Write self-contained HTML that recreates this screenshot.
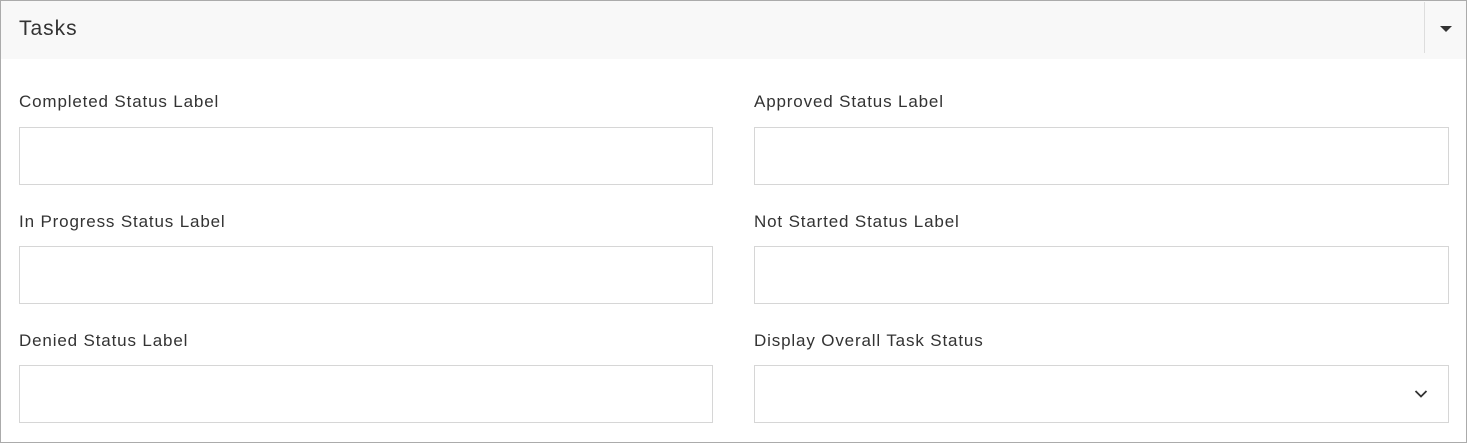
<!DOCTYPE html>
<html><head><style>
html,body{margin:0;padding:0;width:1467px;height:443px;background:#fff;overflow:hidden}
body{font-family:"Liberation Sans",sans-serif;color:#333}
.box{position:absolute;left:0;top:0;width:1465px;height:441px;border:1px solid #ababab}
.hdr{position:absolute;left:0;top:0;width:1465px;height:58px;background:#f8f8f8}
.ttl{position:absolute;left:18px;top:16px;font-size:21px;letter-spacing:1px;color:#333}
.div{position:absolute;left:1423px;top:1px;width:1px;height:51px;background:#ddd}
.tri{position:absolute;left:1439px;top:25px;width:0;height:0;border-left:6px solid transparent;border-right:6px solid transparent;border-top:6px solid #333}
.lbl{position:absolute;font-size:17px;letter-spacing:0.85px;color:#333}
.inp{position:absolute;width:692px;height:56px;border:1px solid #d6d6d6;background:#fff}
</style></head><body>
<div class="box">
<div class="hdr"><div class="ttl">Tasks</div><div class="div"></div><div class="tri"></div></div>
</div>
<div class="lbl" style="left:19px;top:92px">Completed Status Label</div>
<div class="lbl" style="left:754px;top:92px">Approved Status Label</div>
<div class="inp" style="left:19px;top:127px"></div>
<div class="inp" style="left:754px;top:127px;width:693px"></div>
<div class="lbl" style="left:19px;top:212px">In Progress Status Label</div>
<div class="lbl" style="left:754px;top:212px">Not Started Status Label</div>
<div class="inp" style="left:19px;top:246px"></div>
<div class="inp" style="left:754px;top:246px;width:693px"></div>
<div class="lbl" style="left:19px;top:331px">Denied Status Label</div>
<div class="lbl" style="left:754px;top:331px">Display Overall Task Status</div>
<div class="inp" style="left:19px;top:365px"></div>
<div class="inp" style="left:754px;top:365px;width:693px">
<svg style="position:absolute;left:659px;top:23px" width="14" height="10" viewBox="0 0 14 10"><path d="M1.5 2 L7 7.5 L12.5 2" fill="none" stroke="#333" stroke-width="1.8"/></svg>
</div>
</body></html>
